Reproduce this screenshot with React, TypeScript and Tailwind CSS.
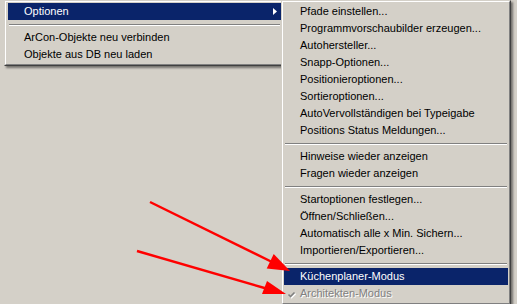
import React from "react";

type Entry = { label: string; hot?: boolean; disabled?: boolean; checked?: boolean; sub?: boolean } | "sep";

const leftItems: Entry[] = [
  { label: "Optionen", hot: true, sub: true },
  "sep",
  { label: "ArCon-Objekte neu verbinden" },
  { label: "Objekte aus DB neu laden" },
];

const subItems: Entry[] = [
  { label: "Pfade einstellen..." },
  { label: "Programmvorschaubilder erzeugen..." },
  { label: "Autohersteller..." },
  { label: "Snapp-Optionen..." },
  { label: "Positionieroptionen..." },
  { label: "Sortieroptionen..." },
  { label: "AutoVervollständigen bei Typeigabe" },
  { label: "Positions Status Meldungen..." },
  "sep",
  { label: "Hinweise wieder anzeigen" },
  { label: "Fragen wieder anzeigen" },
  "sep",
  { label: "Startoptionen festlegen..." },
  { label: "Öffnen/Schließen..." },
  { label: "Automatisch alle x Min. Sichern..." },
  { label: "Importieren/Exportieren..." },
  "sep",
  { label: "Küchenplaner-Modus", hot: true },
  { label: "Architekten-Modus", disabled: true, checked: true },
];

function Check() {
  return (
    <svg width="9" height="9" viewBox="0 0 9 9" className="absolute left-[3px] top-[5px]">
      <path d="M1.5 4.5 L3.5 6.5 L7.5 2.5" fill="none" stroke="#ffffff" strokeWidth="1.6" transform="translate(1 1)" />
      <path d="M1.5 4.5 L3.5 6.5 L7.5 2.5" fill="none" stroke="#808080" strokeWidth="1.6" />
    </svg>
  );
}

function Menu({ items, pad }: { items: Entry[]; pad: string }) {
  return (
    <div className="border border-t-[#d4d0c8] border-l-[#d4d0c8] border-r-[#404040] border-b-[#404040] bg-[#d4d0c8] shadow-[2px_2px_2px_rgba(0,0,0,0.45)]">
      <div className={`border border-t-white border-l-white border-r-[#808080] border-b-[#808080] py-[1px] ${pad}`}>
        {items.map((it, i) =>
          it === "sep" ? (
            <div key={i} className="h-[9px] pt-[4px] px-[1px]">
              <div className="h-[1px] bg-[#808080]" />
              <div className="h-[1px] bg-white" />
            </div>
          ) : (
            <div
              key={i}
              className={`relative h-[17px] flex items-center pl-[16px] pr-[8px] whitespace-nowrap ${
                it.hot ? "bg-[#0a246a] text-white" : it.disabled ? "text-[#808080] [text-shadow:1px_1px_0_#ffffff]" : "text-black"
              }`}
            >
              {it.checked && <Check />}
              <span className="flex-1">{it.label}</span>
              {it.sub && (
                <svg width="4" height="7" viewBox="0 0 4 7" className="mr-[-4px]">
                  <path d="M0 0 L4 3.5 L0 7 Z" fill={it.hot ? "#ffffff" : "#000000"} />
                </svg>
              )}
            </div>
          )
        )}
      </div>
    </div>
  );
}

export default function App() {
  return (
    <div className="relative w-[517px] h-[304px] overflow-hidden bg-[#d4d0c8] text-[11px] leading-none font-['Liberation_Sans',Arial,sans-serif]">
      <div className="flex items-start pl-[4px]">
        <div className="w-[280px]">
          <Menu items={leftItems} pad="pl-[2px] pr-[1px]" />
        </div>
        <div className="relative w-[230px] -ml-[3px]">
          <Menu items={subItems} pad="px-[1px]" />
        </div>
      </div>

      <svg className="absolute inset-0 pointer-events-none" width="517" height="304" viewBox="0 0 517 304">
        <line x1="150" y1="202" x2="272" y2="262" stroke="#ff0000" strokeWidth="2.5" />
        <polygon points="290,271 266.7,268.5 273.7,254.1" fill="#ff0000" />
        <line x1="137" y1="251" x2="268" y2="289" stroke="#ff0000" strokeWidth="2.5" />
        <polygon points="286,294 262,294 267,281" fill="#ff0000" />
      </svg>
    </div>
  );
}
